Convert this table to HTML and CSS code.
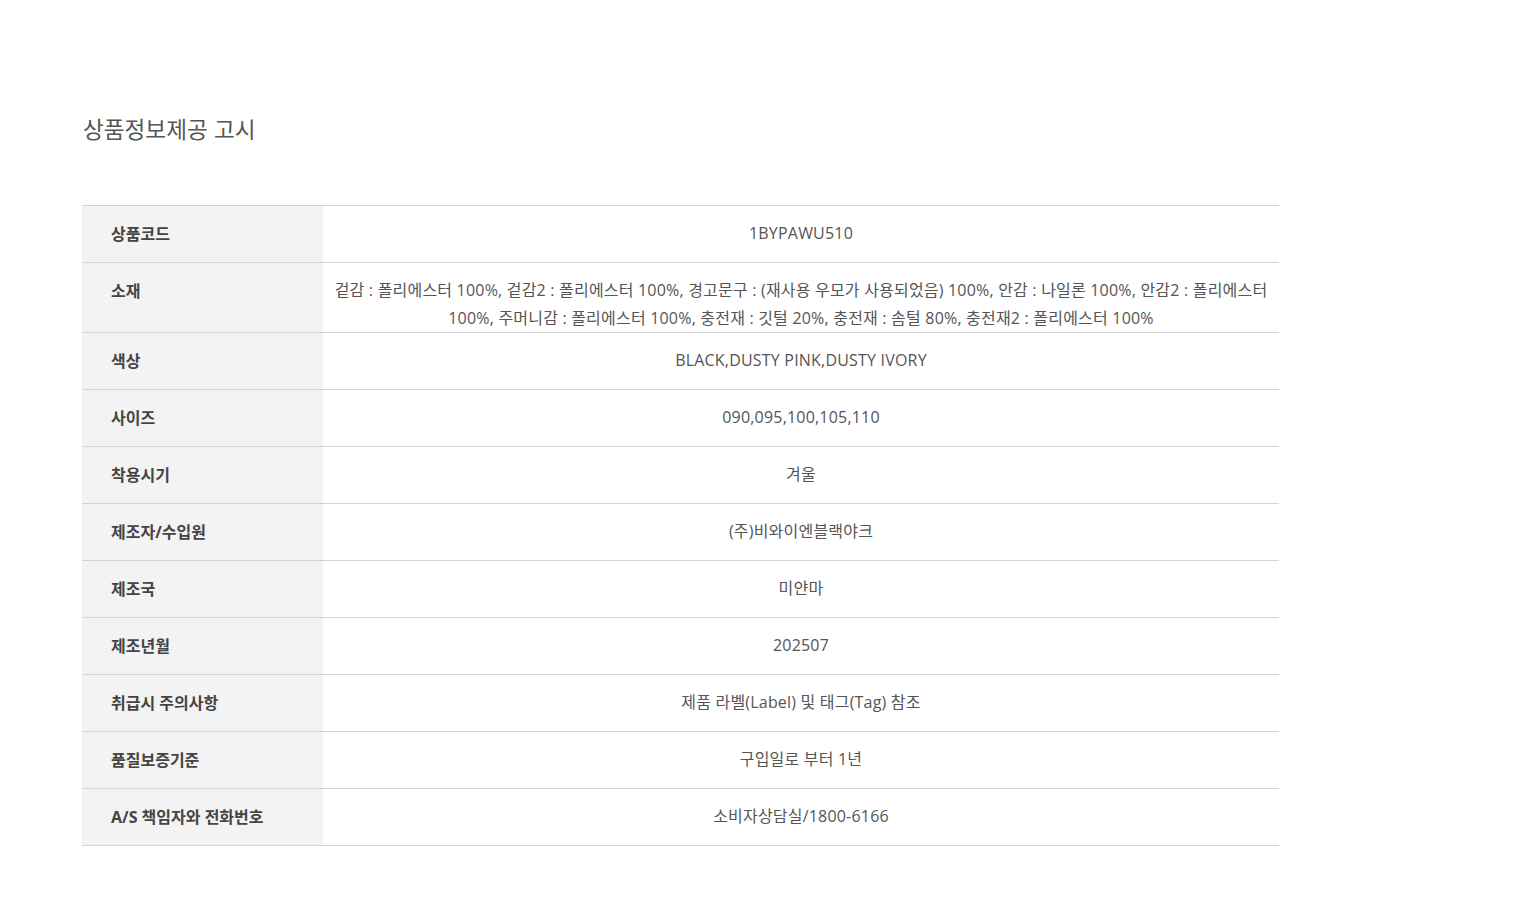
FILE: index.html
```html
<!DOCTYPE html>
<html lang="ko">

<head>
  <meta charset="UTF-8" />
  <meta name="viewport" content="width=device-width, initial-scale=1.0" />
  <title>상품정보제공 고시</title>
  <link rel="stylesheet" href="styles.css">
</head>

<body>
  <div class="container">
    <h2 class="title">상품정보제공 고시</h2>

    <table class="info-table">
      <tbody>
        <tr>
          <th>상품코드</th>
          <td>1BYPAWU510</td>
        </tr>
        <tr>
          <th>소재</th>
          <td>겉감 : 폴리에스터 100%, 겉감2 : 폴리에스터 100%, 경고문구 : (재사용 우모가 사용되었음) 100%, 안감 : 나일론 100%, 안감2 : 폴리에스터 100%, 주머니감 : 폴리에스터 100%, 충전재 : 깃털 20%, 충전재 : 솜털 80%, 충전재2 : 폴리에스터 100%</td>
        </tr>
        <tr>
          <th>색상</th>
          <td>BLACK,DUSTY PINK,DUSTY IVORY</td>
        </tr>
        <tr>
          <th>사이즈</th>
          <td>090,095,100,105,110</td>
        </tr>
        <tr>
          <th>착용시기</th>
          <td>겨울</td>
        </tr>
        <tr>
          <th>제조자/수입원</th>
          <td>(주)비와이엔블랙야크</td>
        </tr>
        <tr>
          <th>제조국</th>
          <td>미얀마</td>
        </tr>
        <tr>
          <th>제조년월</th>
          <td>202507</td>
        </tr>
        <tr>
          <th>취급시 주의사항</th>
          <td>제품 라벨(Label) 및 태그(Tag) 참조</td>
        </tr>
        <tr>
          <th>품질보증기준</th>
          <td>구입일로 부터 1년</td>
        </tr>
        <tr>
          <th>A/S 책임자와 전화번호</th>
          <td>소비자상담실/1800-6166</td>
        </tr>
      </tbody>
    </table>
  </div>
</body>

</html>
```

FILE: styles.css
```css
body {
  margin: 0;
  padding: 0;
  font-family: 'Open Sans', 'Noto Sans CJK KR', sans-serif;
  background-color: #fff;
  color: #555;
}

.container {
  width: 1197px;
  padding: 115px 0 60px 82px;
}

.title {
  margin: 0 0 62px 1px;
  font-family: 'Noto Sans CJK KR', sans-serif;
  font-size: 22.6px;
  font-weight: 400;
  line-height: 28px;
  color: #555;
}

.info-table {
  width: 100%;
  border-collapse: collapse;
  border-top: 1px solid #d4d4d4;
}

.info-table tr {
  border-bottom: 1px solid #d4d4d4;
}

.info-table th {
  width: 241px;
  padding: 16px 0 16px 29px;
  box-sizing: border-box;
  background-color: #f3f3f3;
  text-align: left;
  vertical-align: top;
  font-size: 16px;
  font-weight: 700;
  line-height: 24px;
  color: #444;
}

.info-table td {
  padding: 13px 6px 0;
  text-align: center;
  vertical-align: top;
  font-size: 16px;
  line-height: 28px;
  letter-spacing: 0.2px;
  color: #555;
}
```
